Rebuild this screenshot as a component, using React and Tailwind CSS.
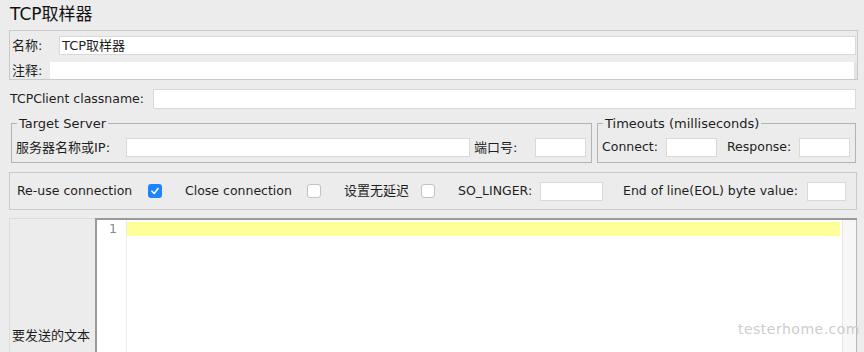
import React from 'react';

const FONT = '"DejaVu Sans", "Noto Sans CJK SC", sans-serif';

const Input = ({ className = '', value = '' }) => (
  <div className={`shrink-0 h-[19px] bg-white border border-[#d9d9d9] flex items-center px-[2px] ${className}`}>
    {value}
  </div>
);

const Label = ({ className = '', children }) => (
  <span className={`shrink-0 whitespace-nowrap ${className}`}>{children}</span>
);

const Check = ({ checked }) =>
  checked ? (
    <div className="shrink-0 w-[14px] h-[14px] rounded-[3px] bg-[#1c84fc] flex items-center justify-center">
      <svg width="10" height="10" viewBox="0 0 10 10">
        <path d="M2 5.2 L4.2 7.5 L8 2.5" fill="none" stroke="#fff" strokeWidth="1.6" strokeLinecap="round" strokeLinejoin="round" />
      </svg>
    </div>
  ) : (
    <div className="shrink-0 w-[14px] h-[14px] rounded-[3px] bg-white border border-[#c2c2c2]" />
  );

export default function App() {
  return (
    <div className="w-[864px] h-[352px] bg-[#ececec] overflow-hidden text-[12.5px] text-[#1e1e1e] relative" style={{ fontFamily: FONT }}>
      {/* title */}
      <div className="h-[30px] pl-[10px] flex items-center text-[17px] text-[#111]">TCP取样器</div>

      {/* name / comments */}
      <div className="ml-[9px] w-[849px] h-[50px] border border-[#c9c9c9] flex flex-col">
        <div className="flex items-center mt-[5px] h-[19px]">
          <Label className="w-[49px] pl-[2px] text-[13px]">名称:</Label>
          <Input className="w-[797px] text-[13px]" value="TCP取样器" />
        </div>
        <div className="flex items-center mt-[7px] h-[17px]">
          <Label className="w-[40px] pl-[2px] text-[13px]">注释:</Label>
          <div className="flex-1 h-[17px] bg-white border-r-[3px] border-[#e4e4e4]" />
        </div>
      </div>

      {/* classname */}
      <div className="flex items-center mt-[9px] h-[20px]">
        <Label className="w-[153px] pl-[10px]">TCPClient classname:</Label>
        <Input className="w-[703px] h-[20px]" />
      </div>

      {/* server + timeouts */}
      <div className="flex mt-[7px] pl-[11px] gap-[5px]">
        <fieldset className="shrink-0 w-[581px] h-[47px] border border-[#b3b3b3] px-0">
          <legend className="ml-[5px] px-[2px] leading-[15px] text-[13px]">Target Server</legend>
          <div className="flex items-center mt-[7px] h-[19px] text-[13px]">
            <Label className="w-[114px] pl-[4px]">服务器名称或IP:</Label>
            <Input className="w-[344px]" />
            <Label className="w-[65px] pl-[4px]">端口号:</Label>
            <Input className="w-[51px]" />
          </div>
        </fieldset>
        <fieldset className="shrink-0 w-[259px] h-[47px] border border-[#b3b3b3] px-0">
          <legend className="ml-[5px] px-[2px] leading-[15px] text-[13px]">Timeouts (milliseconds)</legend>
          <div className="flex items-center mt-[7px] h-[19px]">
            <Label className="w-[68px] pl-[4px]">Connect:</Label>
            <Input className="w-[51px]" />
            <Label className="w-[82px] pl-[10px]">Response:</Label>
            <Input className="w-[51px]" />
          </div>
        </fieldset>
      </div>

      {/* options */}
      <div className="ml-[9px] w-[848px] h-[38px] mt-[9px] border border-[#c9c9c9] flex items-center">
        <Label className="w-[138px] pl-[7px]">Re-use connection</Label>
        <Check checked />
        <Label className="w-[145px] pl-[23px]">Close connection</Label>
        <Check />
        <Label className="w-[100px] pl-[23px] text-[13px]">设置无延迟</Label>
        <Check />
        <Label className="w-[105px] pl-[23px]">SO_LINGER:</Label>
        <Input className="w-[63px]" />
        <Label className="w-[204px] pl-[20px]">End of line(EOL) byte value:</Label>
        <Input className="w-[39px]" />
      </div>

      {/* text to send */}
      <div className="flex mt-[8px] ml-[9px] h-[140px]">
        <div className="shrink-0 w-[86px] border-l border-t border-[#dcdcdc] flex items-end pb-[13px] pl-[2px] text-[13px]">要发送的文本</div>
        <div className="w-[762px] shrink-0 flex border-l-2 border-t-2 border-[#9a9a9a] bg-white">
          <div className="shrink-0 w-[30px] bg-white border-r border-[#ececec] text-[#8a8a8a] text-right pr-[9px] pt-[1px] leading-[16px]">1</div>
          <div className="flex-1 pt-[2px] pr-[2px]">
            <div className="h-[14px] bg-[#ffff99]" />
          </div>
          <div className="shrink-0 w-[15px] bg-[#f7f7f7] border-l border-[#e6e6e6] border-r border-r-[#b8b8b8]" />
        </div>
      </div>

      {/* watermark */}
      <div className="absolute right-[4px] bottom-[12px] text-[14px] tracking-[0.5px] text-[#cdcdcd]" style={{ fontFamily: '"DejaVu Sans", sans-serif' }}>
        testerhome.com
      </div>
    </div>
  );
}
